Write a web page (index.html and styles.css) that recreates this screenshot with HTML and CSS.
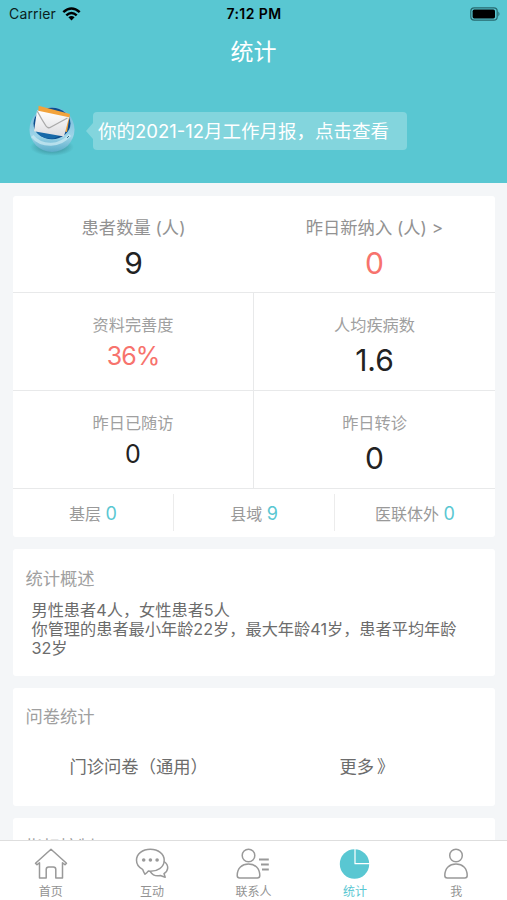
FILE: index.html
```html
<!DOCTYPE html>
<html lang="zh-CN">
<head>
<meta charset="utf-8">
<title>统计</title>
<link rel="stylesheet" href="styles.css">
</head>
<body>
<div class="app">
  <header class="header">
    <div class="status">
      <div class="carrier">Carrier
        <svg width="19" height="14" viewBox="0 0 19 14"><g fill="none" stroke="#000" stroke-width="2.5"><path d="M1.3 5.2Q9.5-2.3 17.7 5.2"/><path d="M4.3 8.4Q9.5 3.6 14.7 8.4"/></g><path d="M6.4 10.3Q9.5 7.8 12.6 10.3L9.5 13.6Z"/></svg>
      </div>
      <div class="time">7:12 PM</div>
      <svg class="battery" width="31" height="14" viewBox="0 0 31 14"><rect x=".8" y=".8" width="26.4" height="12.4" rx="3.4" fill="none" stroke="#27696f" stroke-width="1.2"/><rect x="2.6" y="2.6" width="22.4" height="8.8" rx="1.6"/><path d="M28.4 4.6Q30.6 7 28.4 9.4Z" fill="#27696f"/></svg>
    </div>
    <h1 class="title">统计</h1>
    <div class="report">
      <svg class="mail" width="52" height="58" viewBox="0 0 52 58">
        <defs>
          <linearGradient id="ball" x1="0" y1="0" x2="0" y2="1"><stop offset="0" stop-color="#6cb8d8"/><stop offset=".65" stop-color="#9ed4e8"/><stop offset="1" stop-color="#5aadc9"/></linearGradient>
          <linearGradient id="paper" x1="0" y1="0" x2="0" y2="1"><stop offset="0" stop-color="#fff"/><stop offset="1" stop-color="#dcdcdf"/></linearGradient>
          <radialGradient id="shade"><stop offset="0" stop-color="#246570" stop-opacity=".75"/><stop offset="1" stop-color="#246570" stop-opacity="0"/></radialGradient>
        </defs>
        <ellipse cx="26" cy="45" rx="22" ry="9" fill="url(#shade)"/>
        <circle cx="26" cy="27.5" r="22.5" fill="url(#ball)"/>
        <ellipse cx="26" cy="21.5" rx="18.5" ry="15.7" fill="#0c4d8e"/>
        <path d="M8 26Q13 38 28 36.5L35 33Z" fill="#1769a8"/>
        <path d="M12.5 3.8L44 12 41 30 12 24Z" fill="#f2a33c"/>
        <path d="M11 8.4L43 15.2 38 34.6 8 29.2Z" fill="url(#paper)"/>
        <path d="M11.3 9.3Q16 18 20 24Q22 27 25 25L41.5 16" fill="none" stroke="#aaa" stroke-width="1.3"/>
        <path d="M6.2 34Q13 42.5 25 42.3 36 42 44 33" fill="none" stroke="#c9eaf3" stroke-width="3" opacity=".75"/>
        <path d="M41 36l2-2" stroke="#396f8c"/>
      </svg>
      <div class="bubble">你的2021-12月工作月报，点击查看</div>
    </div>
  </header>
  <main class="content">
    <section class="card stats">
      <div class="row first">
        <div class="cell"><span class="label big">患者数量 (人)</span><span class="num n30">9</span></div>
        <div class="cell"><span class="label big">昨日新纳入 (人) &gt;</span><span class="num n30 red">0</span></div>
      </div>
      <div class="row">
        <div class="cell"><span class="label">资料完善度</span><span class="num n25 red percent">36%</span></div>
        <div class="cell"><span class="label">人均疾病数</span><span class="num n30">1.6</span></div>
      </div>
      <div class="row">
        <div class="cell"><span class="label">昨日已随访</span><span class="num n25">0</span></div>
        <div class="cell"><span class="label">昨日转诊</span><span class="num n30">0</span></div>
      </div>
      <div class="levels">
        <div class="level">基层 <b>0</b></div>
        <div class="level">县域 <b>9</b></div>
        <div class="level">医联体外 <b>0</b></div>
      </div>
    </section>
    <section class="card summary">
      <h2>统计概述</h2>
      <p>男性患者4人，女性患者5人<br>你管理的患者最小年龄22岁，最大年龄41岁，患者平均年龄32岁</p>
    </section>
    <section class="card survey">
      <h2>问卷统计</h2>
      <div class="links"><span>门诊问卷（通用）</span><span class="go">更多 》</span></div>
    </section>
    <section class="card more"><h2>指标控制</h2></section>
  </main>
  <nav class="tabs">
    <div class="tab"><svg width="34" height="32" viewBox="0 0 34 32"><path d="M1.5 15.2L17 1.2 32.5 15.2 31 16.8 28.5 14.7V30H21.8V21.5Q21.8 19 19.3 19H14.7Q12.2 19 12.2 21.5V30H5.5V14.7L3 16.8Z"/></svg><span>首页</span></div>
    <div class="tab"><svg width="34" height="32" viewBox="0 0 34 32"><path d="M15.3 1.3C7.5 1.3 1.5 6 1.5 12.2 1.5 16 3.8 19.3 7.6 21.3Q8.7 24.5 10 26.2 12 24.8 13.2 23.1C22.6 24 29.2 19 29.2 12.2 29.2 6 23.2 1.3 15.3 1.3Z"/><path d="M29 13.5C34.5 17.5 33.4 23 29 25.6L30.2 29.3 25.3 27.5C21.5 28.4 17.5 27 15 23.3"/><g class="fill"><circle cx="8.7" cy="12" r="1.8"/><circle cx="15.4" cy="12" r="1.8"/><circle cx="22.1" cy="12" r="1.8"/></g></svg><span>互动</span></div>
    <div class="tab"><svg width="34" height="32" viewBox="0 0 34 32"><circle cx="12.5" cy="7.5" r="6.3"/><path d="M1.2 27.5C1.2 20 6 16 12.5 16S23.8 20 23.8 27.5Q23.8 30 21.3 30H3.7Q1.2 30 1.2 27.5Z"/><path class="bars" d="M23 11.5h9.8M25 16.4h7.8M26 21.5h6.8"/></svg><span>联系人</span></div>
    <div class="tab active"><svg width="34" height="32" viewBox="0 0 34 32"><circle class="pie" cx="16.5" cy="16" r="14.7"/><path class="cut" d="M17 0V15.7H33"/></svg><span>统计</span></div>
    <div class="tab"><svg width="34" height="32" viewBox="0 0 34 32"><circle cx="17" cy="7.5" r="6.3"/><path d="M5.8 27.5C5.8 20 10.5 16 17 16S28.2 20 28.2 27.5Q28.2 30 25.7 30H8.3Q5.8 30 5.8 27.5Z"/></svg><span>我</span></div>
  </nav>
</div>
</body>
</html>
```
FILE: styles.css
```css
* { box-sizing: border-box; }
body { margin: 0; font-family: Inter, "Noto Sans CJK SC", sans-serif; background: #f4f6f8; }
h1, h2, p { margin: 0; font-weight: 400; }
svg { display: block; flex: none; }
.app { width: 507px; height: 900px; display: flex; flex-direction: column; overflow: hidden; }
.header { height: 183px; flex: none; background: #59c7d2; color: #fff; }
.status { height: 27px; display: grid; grid-template-columns: 1fr auto 1fr; align-items: center; padding: 0 6px 0 9px; color: #0b1e20; font-size: 14px; }
.carrier { display: flex; align-items: center; gap: 6px; letter-spacing: .15px; }
.time { font-weight: 600; font-size: 14px; color: #000; letter-spacing: .4px; margin-right: 2px; }
.battery { justify-self: end; }
.title { height: 49px; line-height: 50px; text-align: center; font-size: 23px; }
.report { display: flex; align-items: center; padding: 25px 0 0 26px; height: 84px; }
.mail { margin-right: 15px; }
.bubble { position: relative; width: 314px; height: 38px; line-height: 39px; padding-left: 5px; border-radius: 4px; background: #83d5dd; font-size: 18.5px; white-space: nowrap; }
.bubble::before { content: ""; position: absolute; right: 100%; top: 11px; border: 8px solid transparent; border-left: 0; border-right: 7px solid #83d5dd; }
.content { flex: 1; min-height: 0; overflow: hidden; padding: 13px 12px 0 13px; display: flex; flex-direction: column; gap: 12px; }
.card { flex: none; background: #fff; border-radius: 3px; }
.stats { height: 341px; }
.row { height: 98px; display: grid; grid-template-columns: 1fr 1fr; border-bottom: 1px solid #e8e9ea; }
.row.first { height: 97px; }
.cell { display: flex; flex-direction: column; align-items: center; padding-top: 20px; }
.row:not(.first) .cell:first-child { border-right: 1px solid #e8e9ea; }
.label { height: 24px; line-height: 24px; font-size: 16.2px; color: #a0a0a0; }
.label.big { font-size: 17.3px; color: #929292; }
.num { color: #222; }
.n30 { font-size: 30px; line-height: 46px; }
.n25 { font-size: 25px; line-height: 38px; }
.percent { letter-spacing: -1px; }
.red { color: #f7736d; }
.levels { display: grid; grid-template-columns: 160px 161px 1fr; padding-top: 5px; }
.level { height: 37px; line-height: 39px; text-align: center; font-size: 16px; color: #999; }
.level + .level { border-left: 1px solid #ececec; }
.level b { font-size: 18px; font-weight: 400; color: #59c7d2; }
h2 { font-size: 17.3px; line-height: 24px; color: #a0a0a0; padding-left: 12.5px; }
.summary { height: 127px; padding-top: 18px; }
.summary p { padding: 10px 20px 0 18.5px; font-size: 16.2px; line-height: 19.2px; color: #6c6c6c; }
.survey { height: 118px; padding-top: 17px; }
.links { display: grid; grid-template-columns: 270px 1fr; font-size: 17.3px; line-height: 26px; padding: 25px 0 0 56.5px; color: #6c6c6c; }
.links .go { word-spacing: -2px; }
.more { height: 118px; padding-top: 17px; }
.tabs { flex: none; height: 60px; border-top: 1px solid #dedede; background: #fff; display: grid; grid-template-columns: repeat(5, 1fr); }
.tab { display: flex; flex-direction: column; align-items: center; padding-top: 7px; font-size: 12px; line-height: 20px; color: #929292; }
.tab span { margin-top: 2px; }
.tab svg { fill: none; stroke: #999; stroke-width: 1.5; stroke-linejoin: round; }
.tab svg .fill { fill: #999; stroke: none; }
.tab svg .bars { stroke-width: 2; }
.tab svg .pie { fill: #59c7d2; stroke: none; }
.tab svg .cut { stroke: #fff; stroke-width: 1.2; }
.tab.active { color: #59c7d2; }
```
